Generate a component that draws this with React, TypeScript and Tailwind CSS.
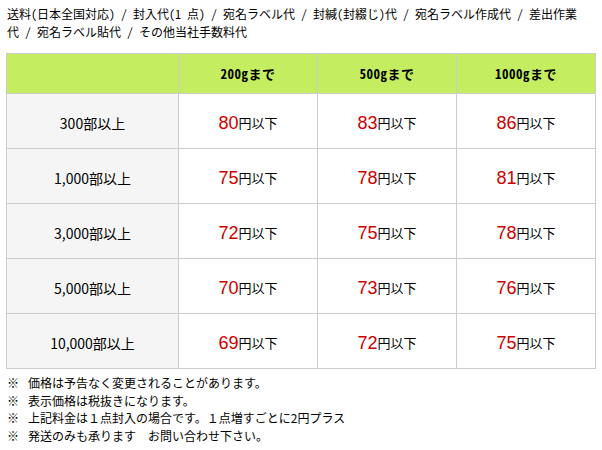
import React from "react";

const cols = ["200gまで", "500gまで", "1000gまで"];
const rows: { label: string; prices: string[] }[] = [
  { label: "300部以上", prices: ["80", "83", "86"] },
  { label: "1,000部以上", prices: ["75", "78", "81"] },
  { label: "3,000部以上", prices: ["72", "75", "78"] },
  { label: "5,000部以上", prices: ["70", "73", "76"] },
  { label: "10,000部以上", prices: ["69", "72", "75"] },
];

const notes = [
  "価格は予告なく変更されることがあります。",
  "表示価格は税抜きになります。",
  "上記料金は１点封入の場合です。１点増すごとに2円プラス",
  "発送のみも承ります　お問い合わせ下さい。",
];

export default function App() {
  return (
    <div
      className="w-[602px] h-[450px] bg-white text-black overflow-hidden"
      style={{ fontFamily: '"Noto Sans CJK JP", "Noto Sans", sans-serif' }}
    >
      <p className="pl-[7px] pt-[5px] text-[12px] leading-[18px] pr-[8px] [font-feature-settings:'hwid']">
        送料(日本全国対応) / 封入代(1 点) / 宛名ラベル代 / 封緘(封綴じ)代 / 宛名ラベル作成代 / 差出作業
        <br />
        代 / 宛名ラベル貼代 / その他当社手数料代
      </p>

      <div className="ml-[6px] mt-[12px] w-[590px] grid grid-cols-[171px_138px_138px_138px] gap-px p-px bg-[#cccccc]">
        <div className="h-[39px] bg-[#c4ed5f]" />
        {cols.map((c) => (
          <div
            key={c}
            className="h-[39px] bg-[#c4ed5f] flex items-center justify-center text-[13px] font-bold tracking-[0.5px] [font-feature-settings:'hwid']"
          >
            {c}
          </div>
        ))}
        {rows.map((r) => (
          <React.Fragment key={r.label}>
            <div className="h-[54px] bg-[#f5f5f5] flex items-center justify-center pt-[4px] text-[14px]">
              {r.label}
            </div>
            {r.prices.map((p, i) => (
              <div
                key={i}
                className="h-[54px] bg-white flex items-center justify-center pt-[3px]"
              >
                <span
                  className="text-[18px] text-[#cc0000] leading-none"
                  style={{ fontFamily: '"Liberation Sans", Arial, sans-serif' }}
                >
                  {p}
                </span>
                <span className="text-[13px] leading-none">円以下</span>
              </div>
            ))}
          </React.Fragment>
        ))}
      </div>

      <ul className="mt-[5px] text-[12px] leading-[17.5px]">
        {notes.map((n) => (
          <li key={n} className="flex pl-[7px]">
            <span className="w-[21px] shrink-0">※</span>
            <span>{n}</span>
          </li>
        ))}
      </ul>
    </div>
  );
}
